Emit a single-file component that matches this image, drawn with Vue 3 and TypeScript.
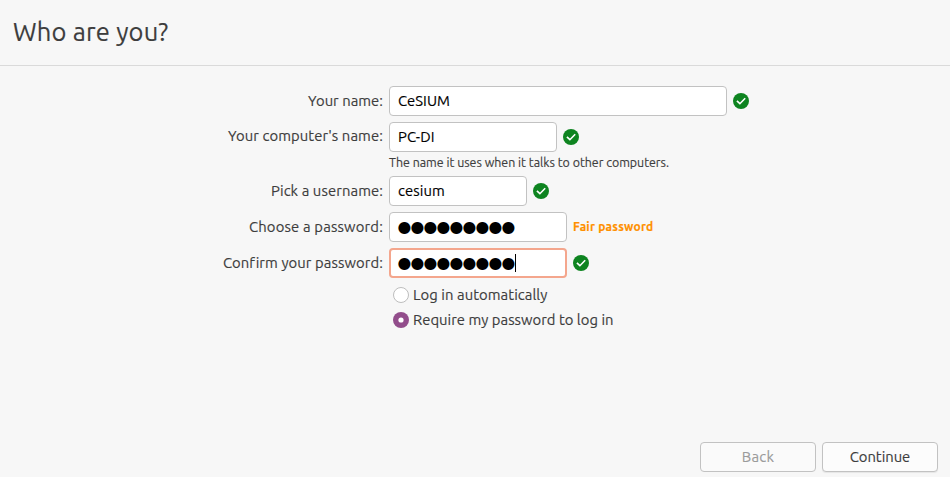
<script setup lang="ts">
import { ref, nextTick } from 'vue'

interface Field {
  id: string
  label: string
  labelWidth: number
  value: string
  valueWidth: number
  password?: boolean
  focused?: boolean
  hint?: string
  strength?: string
}

const fields: Field[] = [
  { id: 'name', label: 'Your name:', labelWidth: 75, value: 'CeSIUM', valueWidth: 52 },
  {
    id: 'host', label: "Your computer's name:", labelWidth: 155, value: 'PC-DI', valueWidth: 36.5,
    hint: 'The name it uses when it talks to other computers.',
  },
  { id: 'user', label: 'Pick a username:', labelWidth: 112, value: 'cesium', valueWidth: 47 },
  { id: 'pass', label: 'Choose a password:', labelWidth: 134, value: '●●●●●●●●●', valueWidth: 117, password: true, strength: 'Fair password' },
  { id: 'confirm', label: 'Confirm your password:', labelWidth: 159.5, value: '●●●●●●●●●', valueWidth: 117, password: true, focused: true },
]

const loginModes = [
  { id: 'auto', label: 'Log in automatically', width: 134.5 },
  { id: 'require', label: 'Require my password to log in', width: 200.5 },
]
const loginMode = ref('require')

// Spreads the letters of a text evenly so that it takes the given width.
const vFit = {
  mounted(el: HTMLElement, binding: { value: number }) {
    nextTick(() => {
      const count = (el.textContent ?? '').length
      const natural = el.getBoundingClientRect().width
      el.style.letterSpacing = `${(binding.value - natural) / count}px`
    })
  },
}
</script>

<template>
  <main class="installer">
    <header class="header">
      <h1 v-fit="155.5" class="title">Who are you?</h1>
    </header>

    <form class="form" @submit.prevent>
      <div v-for="f in fields" :key="f.id" class="row" :class="f.id">
        <div class="label"><span v-fit="f.labelWidth" class="text">{{ f.label }}</span></div>
        <div class="control">
          <div class="line">
            <div class="entry" :class="{ focused: f.focused, secret: f.password }">
              <span v-fit="f.valueWidth" class="text">{{ f.value }}</span>
              <i v-if="f.focused" class="caret"></i>
            </div>
            <span v-if="f.strength" v-fit="80.5" class="text strength">{{ f.strength }}</span>
            <svg v-else class="check" viewBox="0 0 16 16">
              <circle cx="8" cy="8" r="8" fill="#0e8420" />
              <path d="M3.9 7.9 6.9 10.7 12.2 5.3" fill="none" stroke="#fff" stroke-width="1.6" />
            </svg>
          </div>
          <div v-if="f.hint" class="hint"><span v-fit="280" class="text">{{ f.hint }}</span></div>
        </div>
      </div>

      <div class="modes">
        <div v-for="m in loginModes" :key="m.id" class="mode" @click="loginMode = m.id">
          <svg class="radio" viewBox="0 0 16 16">
            <template v-if="loginMode === m.id">
              <circle cx="8" cy="8" r="8" fill="#924d8b" />
              <circle cx="8" cy="8" r="2.6" fill="#fff" />
            </template>
            <circle v-else cx="8" cy="8" r="7.5" fill="#fff" stroke="#bdbdbd" />
          </svg>
          <span v-fit="m.width" class="text">{{ m.label }}</span>
        </div>
      </div>
    </form>

    <footer class="footer">
      <button class="button" disabled><span v-fit="32.5" class="text">Back</span></button>
      <button class="button"><span v-fit="60.5" class="text">Continue</span></button>
    </footer>
  </main>
</template>

<style>
body {
  background: #f7f7f7;
}
</style>

<style scoped>
.installer {
  box-sizing: border-box;
  width: 950px;
  height: 477px;
  display: flex;
  flex-direction: column;
  overflow: hidden;
  background: #f7f7f7;
  color: #3d3d3d;
  font: 14.8px/20px Ubuntu, 'Noto Sans', sans-serif;
  -webkit-text-stroke: 0.15px currentColor;
}
.text {
  display: inline-block;
  white-space: pre;
}
.header {
  box-sizing: border-box;
  height: 66px;
  padding: 14px 0 0 13px;
  border-bottom: 1px solid #dadada;
}
.title {
  display: inline-block;
  margin: 0;
  white-space: pre;
  font-size: 25.5px;
  font-weight: 400;
  line-height: 36px;
}
.form {
  flex: 1;
  display: flex;
  flex-direction: column;
  gap: 6px;
  padding-top: 20px;
}
.row {
  display: grid;
  grid-template-columns: 383px 1fr;
  column-gap: 6px;
}
.label {
  height: 30px;
  padding-top: 5px;
  box-sizing: border-box;
  text-align: right;
}
.host .label {
  padding-top: 4px;
}
.line {
  display: flex;
  align-items: center;
  gap: 6px;
  height: 30px;
}
.entry {
  box-sizing: border-box;
  display: flex;
  align-items: center;
  width: 178px;
  height: 30px;
  padding: 0 8px;
  border: 1px solid #c2c2c2;
  border-radius: 4px;
  background: #fff;
  color: #000;
}
.name .entry {
  width: 338px;
}
.host .entry {
  width: 168px;
}
.user .entry {
  width: 138px;
}
.entry.focused {
  padding: 0 7px;
  border: 2px solid #f4a68d;
}
.secret .text {
  margin-left: -0.5px;
  font: 15.8px/20px 'DejaVu Sans', sans-serif;
  -webkit-text-stroke: 0;
}
.caret {
  width: 1px;
  height: 18px;
  background: #000;
}
.check,
.radio {
  width: 16px;
  height: 16px;
}
.strength {
  color: #ff9000;
  font-size: 12px;
  font-weight: 700;
}
.hint {
  height: 18px;
  font-size: 12.4px;
  line-height: 20px;
}
.modes {
  display: flex;
  flex-direction: column;
  gap: 3px;
  padding-left: 393px;
}
.mode {
  display: flex;
  align-items: center;
  gap: 4px;
  height: 22px;
}
.footer {
  display: flex;
  justify-content: flex-end;
  gap: 6px;
  padding: 0 12px 5px 0;
}
.button {
  box-sizing: border-box;
  width: 116px;
  height: 30px;
  padding: 0;
  border: 1px solid #c2c2c2;
  border-radius: 4px;
  background: #fcfcfc;
  box-shadow: 0 1px 1px rgba(0, 0, 0, 0.07);
  color: #3d3d3d;
  font: inherit;
}
.button:disabled {
  background: #fafafa;
  box-shadow: none;
  color: #9b9b9b;
}
</style>
